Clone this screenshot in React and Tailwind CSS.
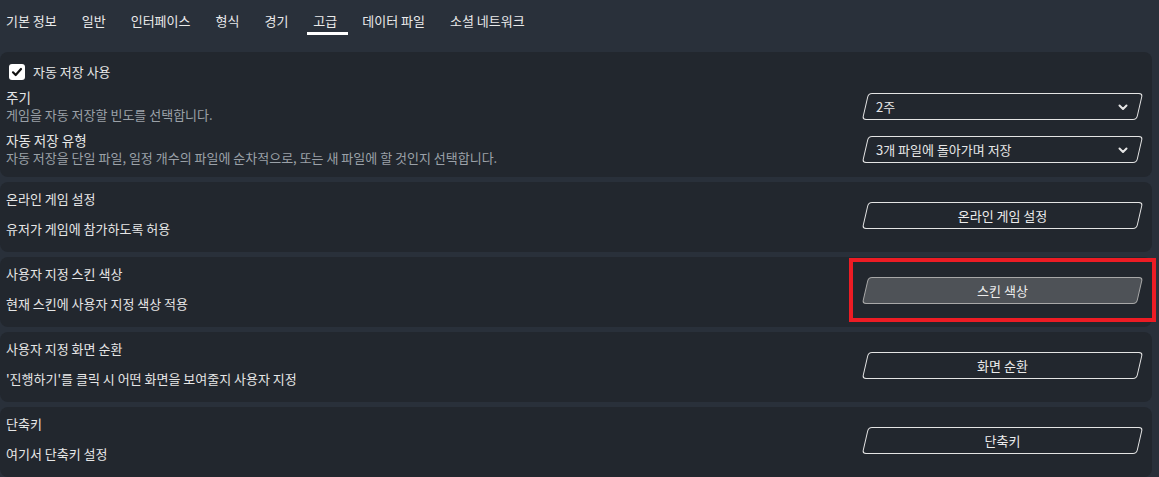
// App.jsx — advanced settings panel (dark theme)

import React, { useState } from 'react';

const tabs = ['기본 정보', '일반', '인터페이스', '형식', '경기', '고급', '데이터 파일', '소셜 네트워크'];

function Chevron() {
  return (
    <svg width="12" height="12" viewBox="0 0 12 12" fill="none">
      <path d="M2.5 4.5 6 8l3.5-3.5" stroke="#e6e6e6" strokeWidth="2" strokeLinecap="round" strokeLinejoin="round" />
    </svg>
  );
}

// Slanted outline box used for selects and buttons
function SlantBox({ children, filled = false, className = '' }) {
  return (
    <div
      className={`h-[27px] w-[275px] shrink-0 -skew-x-[13deg] rounded-[4px] border-[1.5px] ${
        filled ? 'border-[#a8a8a8] bg-[#4e5257]' : 'border-[#e4e4e4] bg-[#22272e]'
      } ${className}`}
    >
      <div className="flex h-full skew-x-[13deg] items-center">{children}</div>
    </div>
  );
}

function Select({ value }) {
  return (
    <SlantBox>
      <span className="flex-1 pl-[10px] text-[13px] text-[#e6e6e6]">{value}</span>
      <span className="pr-[10px]">
        <Chevron />
      </span>
    </SlantBox>
  );
}

function ActionButton({ label, filled }) {
  return (
    <SlantBox filled={filled} className="mt-[13px]">
      <span className="w-full text-center text-[13px] text-[#ececec]">{label}</span>
    </SlantBox>
  );
}

function Card({ children, className = '' }) {
  return <div className={`relative rounded-[8px] bg-[#22272e] ${className}`}>{children}</div>;
}

function ButtonRow({ title, desc, label, filled, highlight }) {
  return (
    <Card className="flex h-[70px] items-start pl-[6px] pr-[12px] pt-[7px]">
      <div className="flex flex-1 flex-col gap-[11px] text-[13px] leading-[19px] text-[#e6e6e6]">
        <span>{title}</span>
        <span>{desc}</span>
      </div>
      <ActionButton label={label} filled={filled} />
      {highlight && (
        <div className="pointer-events-none absolute right-[-4px] top-[1px] h-[64px] w-[307px] border-[4px] border-[#ed1c24]" />
      )}
    </Card>
  );
}

export default function App() {
  const [active] = useState('고급');

  return (
    <div
      className="h-[477px] w-[1159px] overflow-hidden bg-[#29303a] pr-[7px]"
      style={{ fontFamily: '"Noto Sans CJK KR", "Noto Sans", sans-serif' }}
    >
      {/* Tabs */}
      <div className="flex h-[52px] items-start gap-[25px] pl-[6px] pt-[11px] text-[13px] leading-[20px] text-[#eaeaea]">
        {tabs.map((t) => (
          <span key={t} className="relative">
            {t}
            {t === active && (
              <span className="absolute left-[-6px] top-[21px] h-[3px] w-[41px] bg-white" />
            )}
          </span>
        ))}
      </div>

      <div className="flex flex-col gap-[5px]">
        {/* Autosave */}
        <Card className="h-[125px] pl-[6px] pr-[12px] pt-[11px]">
          <label className="flex items-center gap-[8px] pl-[3px] text-[13px] leading-[18px] text-[#e6e6e6]">
            <span className="flex h-[16px] w-[16px] items-center justify-center rounded-[3px] bg-white">
              <svg width="12" height="12" viewBox="0 0 12 12" fill="none">
                <path d="M2 6.3 4.7 9 10 3" stroke="#111" strokeWidth="2.2" strokeLinecap="round" strokeLinejoin="round" />
              </svg>
            </span>
            자동 저장 사용
          </label>

          <div className="mt-[7px] flex items-center">
            <div className="flex flex-1 flex-col">
              <span className="text-[13.5px] leading-[18px] text-[#e6e6e6]">주기</span>
              <span className="text-[13px] leading-[18px] text-[#9ba1a8]">게임을 자동 저장할 빈도를 선택합니다.</span>
            </div>
            <Select value="2주" />
          </div>

          <div className="mt-[7px] flex items-center">
            <div className="flex flex-1 flex-col">
              <span className="text-[13.5px] leading-[18px] text-[#e6e6e6]">자동 저장 유형</span>
              <span className="text-[13px] leading-[18px] text-[#9ba1a8]">
                자동 저장을 단일 파일, 일정 개수의 파일에 순차적으로, 또는 새 파일에 할 것인지 선택합니다.
              </span>
            </div>
            <Select value="3개 파일에 돌아가며 저장" />
          </div>
        </Card>

        <ButtonRow title="온라인 게임 설정" desc="유저가 게임에 참가하도록 허용" label="온라인 게임 설정" />
        <ButtonRow title="사용자 지정 스킨 색상" desc="현재 스킨에 사용자 지정 색상 적용" label="스킨 색상" filled highlight />
        <ButtonRow
          title="사용자 지정 화면 순환"
          desc="'진행하기'를 클릭 시 어떤 화면을 보여줄지 사용자 지정"
          label="화면 순환"
        />
        <ButtonRow title="단축키" desc="여기서 단축키 설정" label="단축키" />
      </div>
    </div>
  );
}
